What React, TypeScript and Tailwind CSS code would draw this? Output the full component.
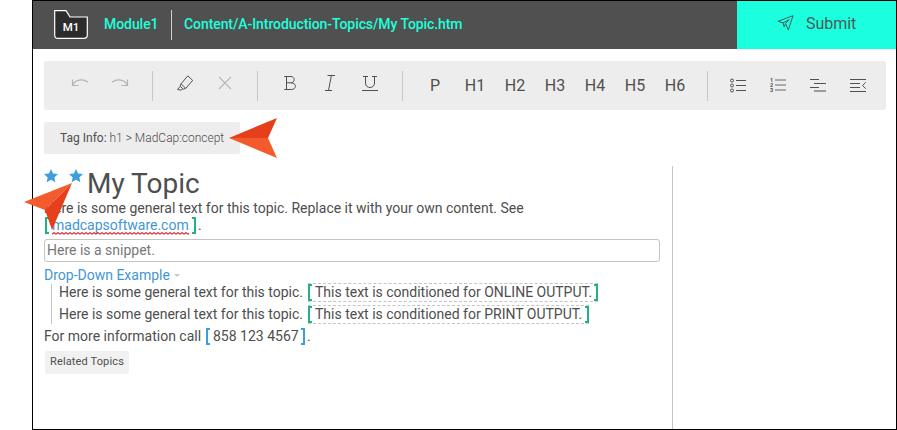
import type { ReactNode } from "react";

function Cell({ children }: { children: ReactNode }) {
  return <div className="flex h-full w-10 shrink-0 items-center justify-center">{children}</div>;
}

function Separator({ narrow }: { narrow?: boolean }) {
  return (
    <div className={narrow ? "w-[23px] shrink-0 pl-3" : "w-[25px] shrink-0 pl-3"}>
      <div className="h-[30px] w-px bg-[#c8c8c8]" />
    </div>
  );
}

function Bracket({ side, color }: { side: "left" | "right"; color: "green" | "blue" }) {
  const tone = color === "green" ? "border-[#23b184]" : "border-[#3a9fdb]";
  const edge = side === "left" ? "border-l-2" : "border-r-2";
  return <span className={`block h-[17px] w-1 shrink-0 border-y-2 ${edge} ${tone}`} />;
}

function Conditioned({ text, width }: { text: string; width: string }) {
  return (
    <div className={`-mt-px flex h-[19px] items-start justify-between ${width}`}>
      <span className="z-10 mt-px block h-[17px] w-1 border-y-2 border-l-2 border-[#23b184]" />
      <span className="-mx-1 flex h-[19px] flex-1 justify-start border-y border-dashed border-[#c5c5c5] pl-[7px] leading-[17px]">{text}</span>
      <span className="z-10 mt-px block h-[17px] w-1 border-y-2 border-r-2 border-[#23b184]" />
    </div>
  );
}

function Star() {
  return (
    <svg width="14" height="14" viewBox="0 0 14 14">
      <path d="M7 0 9 4.5 14 5 10.3 8.4 11.4 13.2 7 10.8 2.6 13.2 3.7 8.4 0 5 5 4.5Z" fill="#3a9fdb" />
    </svg>
  );
}

function Undo({ flip }: { flip?: boolean }) {
  return (
    <svg className={flip ? "-mt-1 -scale-x-100" : "-mt-1"} width="18" height="18" viewBox="0 0 18 18" fill="none" stroke="#b4b4b4" strokeWidth="1.2">
      <path d="M1.5 4.5v6h6.2M1.7 10.2C4 4.7 11.5 3.2 17 7.3" />
    </svg>
  );
}

const headings = ["P", "H1", "H2", "H3", "H4", "H5", "H6"];

export default function App() {
  return (
    <div className="relative h-[430px] w-[897px] overflow-hidden bg-white pl-8 font-[Roboto,sans-serif] text-[14px] text-[#4e4e4e]">
      <div className="h-full w-[865px] border border-black">
        <header className="flex h-12 bg-[#505050] text-[#1effdc]">
          <div className="flex w-[704px] items-center pb-0.5 pl-[21px]">
            <svg className="mt-0.5" width="34" height="30" viewBox="0 0 34 30">
              <path d="M.7.7H12L16 7H33.3V25Q33.3 28.4 29.8 28.4H4Q.7 28.4.7 25Z" fill="#2c2c2c" stroke="#fff" strokeWidth="1.2" />
              <text x="17" y="20.8" textAnchor="middle" fontFamily="Roboto" fontSize="11.5" fontWeight="500" fill="#fff">M1</text>
            </svg>
            <span className="ml-4 w-[53px] whitespace-nowrap font-medium tracking-[-0.06px]">Module1</span>
            <span className="ml-[14px] mt-0.5 h-[30px] w-px bg-[#cfcfcf]" />
            <span className="ml-3 whitespace-nowrap font-medium tracking-[-0.08px]">Content/A-Introduction-Topics/My Topic.htm</span>
          </div>
          <div className="flex flex-1 items-center bg-[#1bffdf] pb-0.5 pl-10 text-[#4e5a58]">
            <svg className="mt-[-3px]" width="18" height="18" viewBox="0 0 18 18" fill="none" stroke="#40605b" strokeWidth="1" strokeLinejoin="round">
              <path d="M1 7.3 16 1.7 11.3 16 8.5 9.5 7.2 12.9 6 8.9ZM6 8.9 12.2 5.7 8.5 9.5" />
            </svg>
            <span className="ml-[11px] text-[16px] leading-5 tracking-[-0.03px]">Submit</span>
          </div>
        </header>

        <div className="ml-[11px] mt-3 flex h-[49px] w-[842px] items-center rounded-[2px] bg-[#ededed] pl-4 text-[#505050]">
          <Cell><Undo /></Cell>
          <Cell><Undo flip /></Cell>
          <Separator />
          <Cell>
            <svg className="-mt-[5px]" width="18" height="18" viewBox="0 0 18 18" fill="none" stroke="#555058" strokeWidth="1" strokeLinejoin="round">
              <path d="m11.8 1.8 4.9 4.6-7 8-4.6-4.6ZM5.1 9.8 4.1 12.2 7.3 15.1 9.7 14.4M4.1 12.4 1.6 15.5 5.1 16.1 6.9 14.8" />
            </svg>
          </Cell>
          <Cell>
            <svg className="-mt-[5px]" width="14" height="14" viewBox="0 0 14 14" stroke="#b9b9b9" strokeWidth="1.2"><path d="m1 1 12 12M13 1 1 13" /></svg>
          </Cell>
          <Separator />
          <Cell>
            <svg className="-mt-[5px]" width="16" height="20" viewBox="0 0 16 20" fill="none" stroke="#505050" strokeWidth="1">
              <path d="M2.2 3.5H9C13.2 3.5 13.2 9.8 9 9.8H4.5M9 9.8C14.8 9.8 14.8 16.5 9.5 16.5H2.2M4.5 3.5V16.5" />
            </svg>
          </Cell>
          <Cell>
            <svg className="-mt-[5px]" width="16" height="20" viewBox="0 0 16 20" fill="none" stroke="#505050" strokeWidth="1">
              <path d="M5.5 2.5H13M3 17.5H10M9.4 2.5 6.5 17.5" />
            </svg>
          </Cell>
          <Cell>
            <svg className="-mt-[5px]" width="16" height="20" viewBox="0 0 16 20" fill="none" stroke="#505050" strokeWidth="1">
              <path d="M1 3.5H6M10 3.5H15M3.5 3.5V10C3.5 16 12.5 16 12.5 10V3.5M0 17.5H16" />
            </svg>
          </Cell>
          <Separator />
          {headings.map((h) => (
            <Cell key={h}><span className="text-[16px]">{h}</span></Cell>
          ))}
          <Separator narrow />
          <Cell>
            <svg className="-mt-px" width="16" height="16" viewBox="0 0 16 16" fill="none" stroke="#505050" strokeWidth="1">
              <path d="M6 3.5H16M6 8.5H16M6 13.5H16" />
              <circle cx="2" cy="3.5" r="1.5" /><circle cx="2" cy="8.5" r="1.5" /><circle cx="2" cy="13.5" r="1.5" />
            </svg>
          </Cell>
          <Cell>
            <svg className="-mt-px" width="16" height="16" viewBox="0 0 16 16">
              <path d="M5 3H16M5 8H16M5 13H16" stroke="#92958e" strokeWidth="1.7" />
              <g fill="#505050" fontFamily="Roboto" fontSize="5.5" fontWeight="700"><text x="0" y="5">1</text><text x="0" y="10">2</text><text x="0" y="15">3</text></g>
            </svg>
          </Cell>
          <Cell>
            <svg className="-mt-px" width="16" height="16" viewBox="0 0 16 16" stroke="#505050" strokeWidth="1">
              <path d="M0 2.5H9M4 6.5H16M0 10.5H9" /><path d="M4 14H16" stroke="#929292" strokeWidth="1.8" />
            </svg>
          </Cell>
          <Cell>
            <svg className="-mt-px" width="16" height="16" viewBox="0 0 16 16" fill="none" stroke="#505050" strokeWidth="1">
              <path d="M0 2.5H16M0 6.5H10M0 10.5H10M0 14.5H16M15.8 5.3 12.5 8.5 15.8 11.7" />
            </svg>
          </Cell>
        </div>

        <div className="ml-[11px] mt-3 flex h-8 w-[196px] items-center whitespace-nowrap rounded-[2px] bg-[#ededed] pl-4 text-[12px]">
          <span>Tag Info:&nbsp;</span><span className="font-light">h1 &gt; MadCap:concept</span>
        </div>

        <div className="mt-3 flex h-[263px]">
          <main className="w-[639px] pl-[11px]">
            <div className="flex h-[34px] items-start">
              <div className="mt-[3px] flex gap-[11px]"><Star /><Star /></div>
              <h1 className="ml-1 text-[28px] leading-[36px]">My Topic</h1>
            </div>
            <p className="h-[17px] whitespace-nowrap leading-[17px]">Here is some general text for this topic. Replace it with your own content. See</p>
            <div className="flex h-[17px] pl-px leading-[17px]">
              <Bracket side="left" color="green" />
              <span className="relative ml-[3px] h-4 w-[137px] whitespace-nowrap text-[#3f96d6]">
                madcapsoftware.com
                <svg className="absolute left-0 top-[15px]" width="137" height="3" fill="none">
                  <defs>
                    <pattern id="squiggle" width="4" height="3" patternUnits="userSpaceOnUse">
                      <path d="M0 2.3 2 .6 4 2.3" stroke="#e8202a" strokeWidth="1.1" />
                    </pattern>
                  </defs>
                  <rect width="137" height="3" fill="url(#squiggle)" />
                </svg>
              </span>
              <span className="ml-[3px]"><Bracket side="right" color="green" /></span>
              <span className="ml-[2px]">.</span>
            </div>
            <div className="mt-[5px] flex h-[23px] w-[616px] items-center rounded-[3px] border border-[#c4c4c4] pl-[2px] text-[#777]">Here is a snippet.</div>
            <div className="mt-[5px] flex h-[17px] items-center text-[#3f96d6]">
              Drop-Down Example
              <span className="ml-1 border-x-[3px] border-t-[3px] border-x-transparent border-t-[#c8c8c8]" />
            </div>
            <div className="ml-[7px] flex h-10 flex-col gap-[3px] border-l border-[#c4c4c4] pl-[7px]">
              <div className="flex h-[19px] whitespace-nowrap leading-[17px]">
                <span className="w-[249px]">Here is some general text for this topic.</span>
                <Conditioned text="This text is conditioned for ONLINE OUTPUT." width="w-[290px]" />
              </div>
              <div className="flex h-[19px] whitespace-nowrap leading-[17px]">
                <span className="w-[249px]">Here is some general text for this topic.</span>
                <Conditioned text="This text is conditioned for PRINT OUTPUT." width="w-[281px]" />
              </div>
            </div>
            <div className="mt-1 flex h-[17px] whitespace-nowrap leading-[17px]">
              <span className="w-[162px]">For more information call</span>
              <Bracket side="left" color="blue" />
              <span className="ml-[3px] w-[88px]">858 123 4567</span>
              <Bracket side="right" color="blue" />
              <span className="ml-[2px]">.</span>
            </div>
            <button className="ml-px mt-[6px] flex h-[23px] w-[84px] items-center justify-center whitespace-nowrap rounded-[2px] bg-[#f1f1f1] text-[11px] tracking-[0.14px]">Related Topics</button>
          </main>
          <aside className="flex-1 border-l border-[#c4c4c4]" />
        </div>
      </div>

      <svg className="absolute left-[229px] top-[117px]" width="49" height="42" viewBox="0 0 49 42">
        <path d="M0 21 48 1 39 21Z" fill="#e63f1c" /><path d="M0 21H39L48 41Z" fill="#f35b2c" />
      </svg>
      <svg className="absolute left-[23px] top-[182px]" width="50" height="49" viewBox="0 0 50 49">
        <path d="M49 1 1 20 22 28Z" fill="#f35b2c" /><path d="M49 1 22 28 29 48Z" fill="#e63f1c" />
      </svg>
    </div>
  );
}
